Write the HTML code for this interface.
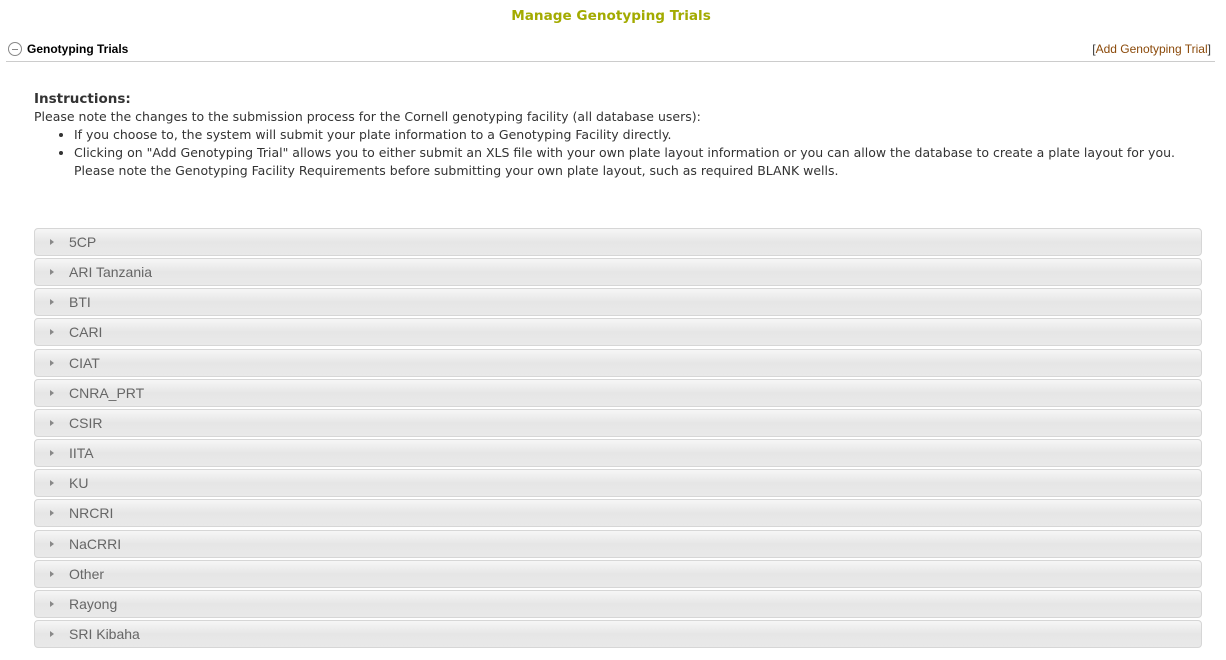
<!DOCTYPE html>
<html><head><style>
body{margin:0;background:#fff;font-family:"Liberation Sans",sans-serif;width:1226px;height:660px;overflow:hidden;position:relative}
.title{position:absolute;top:8px;left:0;width:1222px;text-align:center;color:#a3ab00;font-weight:bold;font-size:13.6px;font-family:"DejaVu Sans",sans-serif}
.hdr{position:absolute;top:40px;left:6px;width:1209px;height:21px;border-bottom:1px solid #ccc}
.hdr .ic{position:absolute;left:2px;top:2px;width:12px;height:12px;border:1px solid #888;border-radius:50%}
.hdr .ic:after{content:"";position:absolute;left:3px;top:5.5px;width:6px;height:1px;background:#888}
.hdr .t{position:absolute;left:21px;top:2px;font-size:12px;font-weight:bold;color:#000}
.hdr .a{position:absolute;right:4px;top:2px;font-size:12px;color:#333}
.hdr .a span{color:#8b4a0a}
.ins{position:absolute;left:34px;top:90px;font-size:12.5px;color:#333;line-height:18px;font-family:"DejaVu Sans",sans-serif;width:1180px;white-space:nowrap}
.ins b{font-size:13.5px}
.ins ul{margin:0;padding-left:40px}
.row{position:absolute;left:34px;width:1166px;height:26px;border:1px solid #d6d6d6;border-radius:4px;background:linear-gradient(#f6f6f6,#e6e6e6 50%,#e9e9e9);font-size:14px;color:#666}
.row .tr{position:absolute;left:15px;top:10px;width:0;height:0;border-left:4px solid #888;border-top:3px solid transparent;border-bottom:3px solid transparent}
.row .l{position:absolute;left:34px;top:5px}
</style></head><body>
<div class="title">Manage Genotyping Trials</div>
<div class="hdr"><div class="ic"></div><div class="t">Genotyping Trials</div><div class="a">[<span>Add Genotyping Trial</span>]</div></div>
<div class="ins"><b>Instructions:</b><br>Please note the changes to the submission process for the Cornell genotyping facility (all database users):
<ul><li>If you choose to, the system will submit your plate information to a Genotyping Facility directly.</li>
<li>Clicking on "Add Genotyping Trial" allows you to either submit an XLS file with your own plate layout information or you can allow the database to create a plate layout for you.<br>Please note the Genotyping Facility Requirements before submitting your own plate layout, such as required BLANK wells.</li></ul></div>
<div class="row" style="top:228px"><div class="tr"></div><div class="l">5CP</div></div>
<div class="row" style="top:258px"><div class="tr"></div><div class="l">ARI Tanzania</div></div>
<div class="row" style="top:288px"><div class="tr"></div><div class="l">BTI</div></div>
<div class="row" style="top:318px"><div class="tr"></div><div class="l">CARI</div></div>
<div class="row" style="top:349px"><div class="tr"></div><div class="l">CIAT</div></div>
<div class="row" style="top:379px"><div class="tr"></div><div class="l">CNRA_PRT</div></div>
<div class="row" style="top:409px"><div class="tr"></div><div class="l">CSIR</div></div>
<div class="row" style="top:439px"><div class="tr"></div><div class="l">IITA</div></div>
<div class="row" style="top:469px"><div class="tr"></div><div class="l">KU</div></div>
<div class="row" style="top:499px"><div class="tr"></div><div class="l">NRCRI</div></div>
<div class="row" style="top:530px"><div class="tr"></div><div class="l">NaCRRI</div></div>
<div class="row" style="top:560px"><div class="tr"></div><div class="l">Other</div></div>
<div class="row" style="top:590px"><div class="tr"></div><div class="l">Rayong</div></div>
<div class="row" style="top:620px"><div class="tr"></div><div class="l">SRI Kibaha</div></div>
</body></html>
